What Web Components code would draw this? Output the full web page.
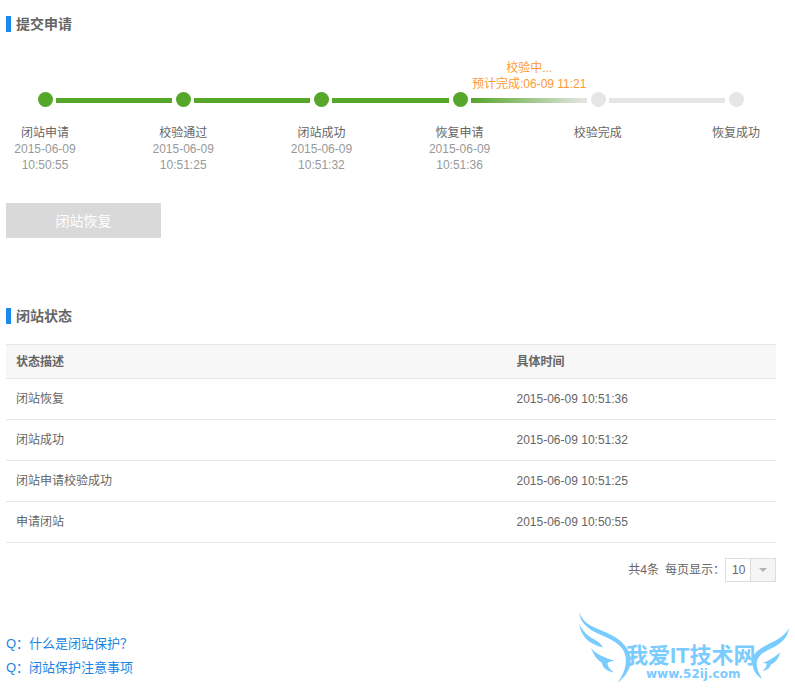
<!DOCTYPE html>
<html lang="zh-CN">
<head>
<meta charset="utf-8">
<title>闭站保护</title>
<style>
  body {
    margin: 0;
    background: #fff;
    color: #666;
    font: 12px/16px "Liberation Sans", "Noto Sans CJK SC", sans-serif;
  }
</style>
</head>
<body>
<site-page>
  <section-title>提交申请</section-title>
  <step-list>
    <step-item state="done" label="闭站申请">2015-06-09 10:50:55</step-item>
    <step-item state="done" label="校验通过">2015-06-09 10:51:25</step-item>
    <step-item state="done" label="闭站成功">2015-06-09 10:51:32</step-item>
    <step-item state="active" label="恢复申请">2015-06-09 10:51:36<span slot="note">校验中...<br>预计完成:06-09 11:21</span></step-item>
    <step-item label="校验完成"></step-item>
    <step-item label="恢复成功" last></step-item>
  </step-list>
  <action-button>闭站恢复</action-button>
  <section-title>闭站状态</section-title>
  <status-table></status-table>
  <page-size></page-size>
  <faq-links></faq-links>
  <site-watermark></site-watermark>
</site-page>

<script>
class SitePage extends HTMLElement {
  connectedCallback() {
    this.attachShadow({ mode: 'open' });
    this.shadowRoot.innerHTML = `
      <style>
        :host {
          display: block;
          position: relative;
          box-sizing: border-box;
          min-height: 100vh;
          padding: 16px 19px 8px 6px;
        }
      </style>
      <slot></slot>
    `;
  }
}
customElements.define('site-page', SitePage);

class SectionTitle extends HTMLElement {
  connectedCallback() {
    this.attachShadow({ mode: 'open' });
    this.shadowRoot.innerHTML = `
      <style>
        :host {
          display: block;
        }

        h2 {
          margin: 0;
          padding-left: 5px;
          border-left: 5px solid #1989f0;
          font-size: 14px;
          line-height: 16px;
        }
      </style>
      <h2><slot></slot></h2>
    `;
  }
}
customElements.define('section-title', SectionTitle);

class StepList extends HTMLElement {
  connectedCallback() {
    this.attachShadow({ mode: 'open' });
    this.shadowRoot.innerHTML = `
      <style>
        :host {
          display: block;
          margin: 28px 0 30px;
        }

        div {
          display: flex;
          padding: 0 32px;
        }
      </style>
      <div role="list"><slot></slot></div>
    `;
  }
}
customElements.define('step-list', StepList);

class StepItem extends HTMLElement {
  connectedCallback() {
    this.setAttribute('role', 'listitem');
    this.attachShadow({ mode: 'open' });
    this.shadowRoot.innerHTML = `
      <style>
        :host {
          --step: #e6e6e6;
          --line: #e6e6e6;
          display: grid;
          flex: 1 1 0;
          min-width: 0;
          grid-template-columns: 15px 1fr;
          grid-template-rows: 32px 15px auto;
        }

        :host([state="done"]) {
          --step: #55a629;
          --line: #55a629;
        }

        :host([state="active"]) {
          --step: #55a629;
          --line: linear-gradient(90deg, #55a629, #e6e6e6);
        }

        :host([last]) {
          flex: none;
        }

        :host([last]) .line {
          display: none;
        }

        .note {
          grid-area: 1 / 2;
          justify-self: center;
          color: #ff9933;
          text-align: center;
          white-space: nowrap;
        }

        .dot {
          grid-area: 2 / 1;
          border-radius: 50%;
          background: var(--step);
        }

        .line {
          grid-area: 2 / 2;
          height: 5px;
          margin: 6px 4px 0 3px;
          background: var(--line);
        }

        .text {
          grid-area: 3 / 1;
          width: 78px;
          margin: 18px 0 0 -32px;
          text-align: center;
        }

        .time {
          padding: 0 4px;
          color: #999;
        }
      </style>
      <div class="note"><slot name="note"></slot></div>
      <div class="dot"></div>
      <div class="line"></div>
      <div class="text">
        <div>${this.getAttribute('label')}</div>
        <div class="time"><slot></slot></div>
      </div>
    `;
  }
}
customElements.define('step-item', StepItem);

class ActionButton extends HTMLElement {
  connectedCallback() {
    this.attachShadow({ mode: 'open' });
    this.shadowRoot.innerHTML = `
      <style>
        :host {
          display: block;
          margin-bottom: 70px;
        }

        button {
          display: block;
          min-width: 155px;
          height: 35px;
          padding: 0 20px;
          border: 0;
          background: #d9d9d9;
          color: #fff;
          font: inherit;
          font-size: 14px;
        }
      </style>
      <button type="button"><slot></slot></button>
    `;
  }
}
customElements.define('action-button', ActionButton);

class StatusTable extends HTMLElement {
  connectedCallback() {
    const rows = [
      ['闭站恢复', '2015-06-09 10:51:36'],
      ['闭站成功', '2015-06-09 10:51:32'],
      ['闭站申请校验成功', '2015-06-09 10:51:25'],
      ['申请闭站', '2015-06-09 10:50:55']
    ];
    this.attachShadow({ mode: 'open' });
    this.shadowRoot.innerHTML = `
      <style>
        :host {
          display: block;
          margin-top: 20px;
        }

        table {
          width: 100%;
          border-spacing: 0;
          table-layout: fixed;
        }

        th, td {
          height: 40px;
          padding: 0 10px;
          border-bottom: 1px solid #e6e6e6;
          text-align: left;
        }

        th {
          height: 33px;
          border-top: 1px solid #e6e6e6;
          background: #f7f7f7;
        }

        th:first-child {
          width: 65%;
          box-sizing: border-box;
        }
      </style>
      <table>
        <thead>
          <tr><th>状态描述</th><th>具体时间</th></tr>
        </thead>
        <tbody>
          ${rows.map(([name, time]) => `<tr><td>${name}</td><td>${time}</td></tr>`).join('')}
        </tbody>
      </table>
    `;
  }
}
customElements.define('status-table', StatusTable);

class PageSize extends HTMLElement {
  connectedCallback() {
    this.attachShadow({ mode: 'open' });
    this.shadowRoot.innerHTML = `
      <style>
        :host {
          display: flex;
          justify-content: flex-end;
          align-items: center;
          margin-top: 15px;
        }

        .total {
          margin-right: 6px;
        }

        .select {
          display: grid;
          align-items: center;
        }

        select {
          grid-area: 1 / 1;
          appearance: none;
          width: 51px;
          height: 24px;
          margin: 0;
          padding: 0 0 0 6px;
          border: 1px solid #ddd;
          border-radius: 0;
          background: linear-gradient(90deg, #fff 24px, #ddd 24px 25px, #f5f5f5 25px);
          color: inherit;
          font: inherit;
        }

        svg {
          grid-area: 1 / 1;
          justify-self: end;
          margin-right: 9px;
          pointer-events: none;
        }
      </style>
      <span class="total">共4条</span>
      <label for="size">每页显示：</label>
      <span class="select">
        <select id="size">
          <option>10</option>
          <option>20</option>
          <option>50</option>
        </select>
        <svg width="8" height="4"><path d="M0 0h8L4 4z" fill="#b3b3b3"/></svg>
      </span>
    `;
  }
}
customElements.define('page-size', PageSize);

class FaqLinks extends HTMLElement {
  connectedCallback() {
    this.attachShadow({ mode: 'open' });
    this.shadowRoot.innerHTML = `
      <style>
        :host {
          display: block;
          margin-top: 50px;
          font-size: 13px;
          line-height: 24px;
        }

        ul {
          margin: 0;
          padding: 0;
          list-style: none;
        }

        a {
          color: #1785e6;
          text-decoration: none;
        }
      </style>
      <ul>
        <li><a href="#what">Q：什么是闭站保护？</a></li>
        <li><a href="#notice">Q：闭站保护注意事项</a></li>
      </ul>
    `;
  }
}
customElements.define('faq-links', FaqLinks);

class SiteWatermark extends HTMLElement {
  connectedCallback() {
    this.attachShadow({ mode: 'open' });
    this.shadowRoot.innerHTML = `
      <style>
        :host {
          position: absolute;
          right: 0;
          bottom: 0;
          pointer-events: none;
        }

        svg {
          display: block;
          fill: #7accff;
        }

        .name {
          font: 700 22px "Liberation Sans", "Noto Sans CJK SC", sans-serif;
        }

        .url {
          font: 700 12px "DejaVu Sans", sans-serif;
        }
      </style>
      <svg width="225" height="88" viewBox="0 0 225 88">
        <g transform="scale(.3333)">
          <path d="M27 36C36 60 52 72 72 82C108 98 140 108 163 135C192 168 190 212 143 248C168 214 176 176 158 148C140 122 108 112 74 96C48 82 30 64 27 36Z"/>
          <path d="M28 72C38 94 54 108 72 118C84 125 94 132 99 142C80 138 62 130 48 116C36 102 30 90 28 72Z"/>
          <path d="M63 144C74 158 90 166 105 172C115 177 124 180 134 181C126 184 118 185 113 188C111 198 120 208 133 218C114 214 98 206 96 189C82 180 70 164 63 144Z"/>
          <path d="M658 84C646 104 626 118 600 130C570 146 548 158 547 184C546 206 558 226 576 236C564 216 558 200 561 184C566 164 584 154 608 143C636 130 652 112 658 84Z"/>
          <path d="M631 157C624 180 614 190 602 194C600 204 592 210 578 213C588 204 592 196 588 190L577 189C596 184 614 172 631 157Z"/>
        </g>
        <text class="name" x="56" y="63">我爱IT技术网</text>
        <text class="url" x="76" y="78">www.52ij.com</text>
      </svg>
    `;
  }
}
customElements.define('site-watermark', SiteWatermark);
</script>
</body>
</html>
